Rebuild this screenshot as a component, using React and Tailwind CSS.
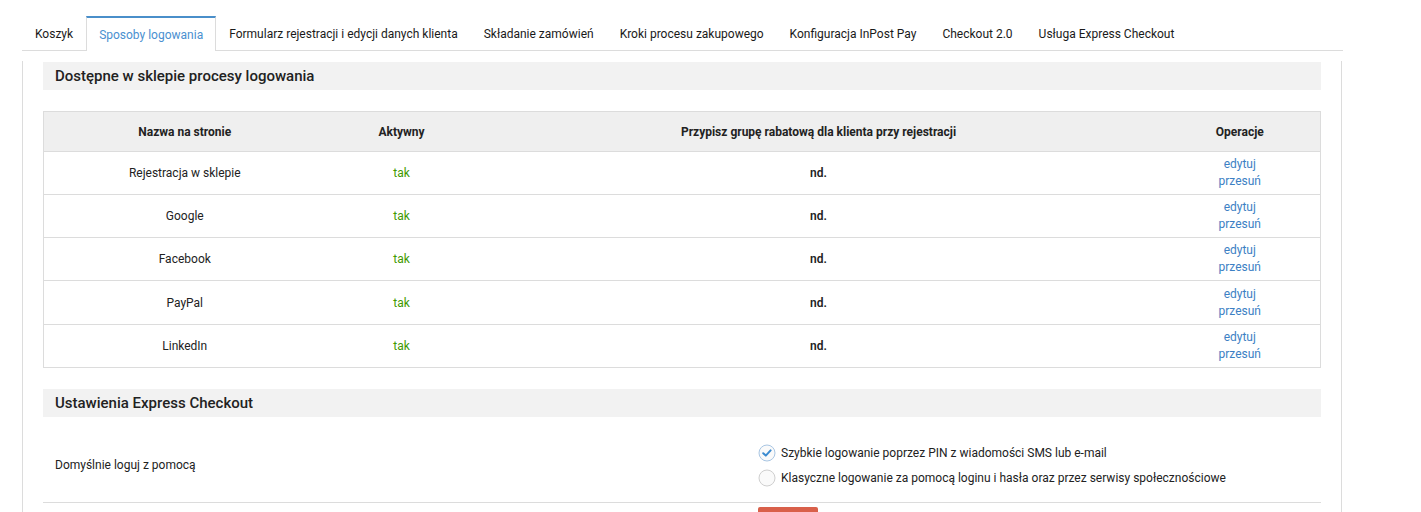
const tabs = [
  "Koszyk",
  "Sposoby logowania",
  "Formularz rejestracji i edycji danych klienta",
  "Składanie zamówień",
  "Kroki procesu zakupowego",
  "Konfiguracja InPost Pay",
  "Checkout 2.0",
  "Usługa Express Checkout",
];

const rows = ["Rejestracja w sklepie", "Google", "Facebook", "PayPal", "LinkedIn"];

const Radio = ({ checked }) => (
  <svg width="18" height="18" viewBox="0 0 18 18" className="shrink-0">
    <circle
      cx="9"
      cy="9"
      r="8"
      fill="#fafafa"
      stroke={checked ? "#a9c6e3" : "#cfcfcf"}
      strokeWidth="1"
    />
    {checked && (
      <path
        d="M5.2 9.2 L7.8 11.6 L12.6 6.4"
        fill="none"
        stroke="#3b8bd0"
        strokeWidth="2"
        strokeLinecap="round"
        strokeLinejoin="round"
      />
    )}
  </svg>
);

const SectionHeader = ({ children }) => (
  <div className="h-[28px] bg-[#f2f2f2] pl-3 flex items-center text-[15px] font-medium text-[#222]">
    {children}
  </div>
);

export default function App() {
  return (
    <div
      className="w-[1421px] h-[512px] overflow-hidden bg-white text-[#222]"
      style={{ fontFamily: "Roboto, 'Liberation Sans', sans-serif" }}
    >
      <div className="pt-4 pl-[22px] w-[1343px]">
        {/* tabs */}
        <div className="flex border-b border-[#dcdcdc] h-[35px] text-[12px]">
          {tabs.map((t, i) =>
            i === 1 ? (
              <div
                key={t}
                className="px-3 h-[35px] pt-px flex items-center bg-white border-t-2 border-t-[#4a8fca] border-x border-x-[#dcdcdc] text-[#4a90d0]"
              >
                {t}
              </div>
            ) : (
              <div key={t} className="px-[13px] pt-[2px] flex items-center text-[#1a1a1a]">
                {t}
              </div>
            )
          )}
        </div>

        {/* panel */}
        <div className="mt-[10px] w-[1320px] border-x border-[#dcdcdc] px-5 pt-px h-[460px]">
          <SectionHeader>Dostępne w sklepie procesy logowania</SectionHeader>

          <table className="mt-[21px] w-full border-collapse border border-[#dcdcdc] text-[12px]">
            <thead>
              <tr className="h-[40px] bg-[#efefef]">
                <th className="w-[282px] font-bold">Nazwa na stronie</th>
                <th className="w-[152px] font-bold">Aktywny</th>
                <th className="font-bold">Przypisz grupę rabatową dla klienta przy rejestracji</th>
                <th className="w-[161px] font-bold">Operacje</th>
              </tr>
            </thead>
            <tbody>
              {rows.map((r, i) => (
                <tr key={r} className={`border-t border-[#dcdcdc] ${i === 3 ? "h-[44px]" : "h-[43px]"}`}>
                  <td className="text-center">{r}</td>
                  <td className="text-center text-[#3f9a00]">tak</td>
                  <td className="text-center font-semibold">nd.</td>
                  <td className="text-center text-[#3d7fc4] leading-[17px]">
                    <div>edytuj</div>
                    <div>przesuń</div>
                  </td>
                </tr>
              ))}
            </tbody>
          </table>

          <div className="mt-[21px]">
            <SectionHeader>Ustawienia Express Checkout</SectionHeader>
          </div>

          <div className="h-[86px] border-b border-[#dcdcdc] flex items-center text-[12px]">
            <div className="w-[715px] pl-3 pt-[10px]">Domyślnie loguj z pomocą</div>
            <div className="flex flex-col gap-[7px] pt-[12px]">
              <label className="flex items-center gap-[5px]">
                <Radio checked />
                <span>Szybkie logowanie poprzez PIN z wiadomości SMS lub e-mail</span>
              </label>
              <label className="flex items-center gap-[5px]">
                <Radio />
                <span>Klasyczne logowanie za pomocą loginu i hasła oraz przez serwisy społecznościowe</span>
              </label>
            </div>
          </div>

          <div className="pl-[715px] mt-[4px]">
            <button className="w-[60px] h-[30px] bg-[#d9604a] rounded-[2px]"></button>
          </div>
        </div>
      </div>
    </div>
  );
}
